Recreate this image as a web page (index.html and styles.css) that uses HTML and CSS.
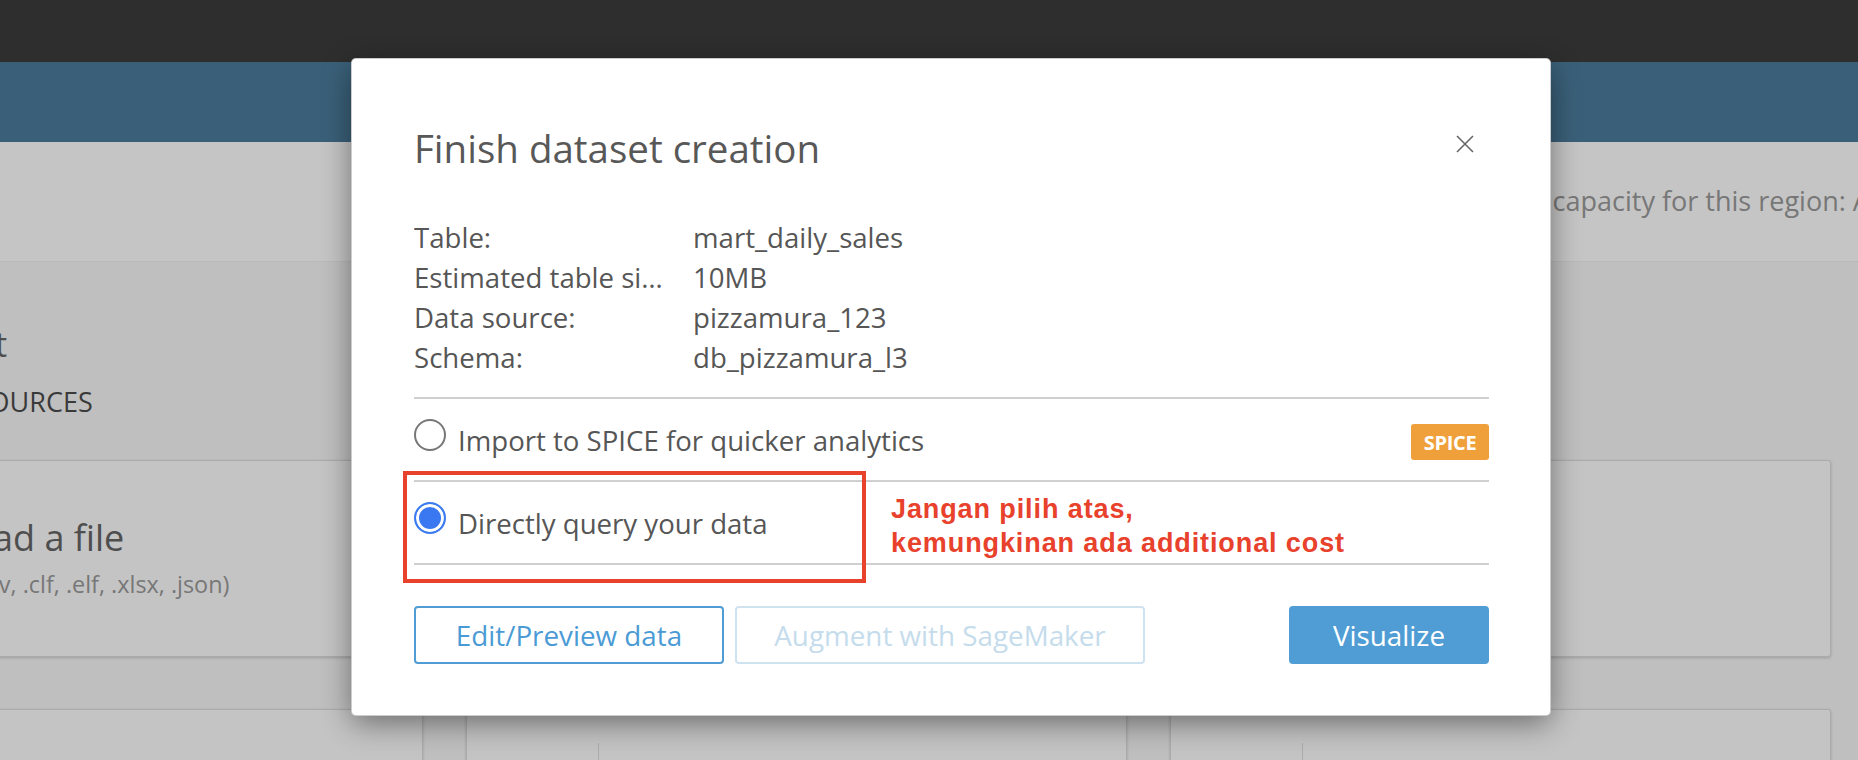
FILE: index.html
```html
<!DOCTYPE html>
<html lang="en">
<head>
<meta charset="utf-8">
<title>Finish dataset creation</title>
<link rel="stylesheet" href="styles.css">
</head>
<body>
<div class="topbar"></div>
<div class="navbar"></div>
<div class="band"><span class="capacity">SPICE capacity for this region: Available</span></div>
<main class="main">
  <div class="intro">
    <h1 class="intro-title">Create a dataset</h1>
    <div class="intro-sub">FROM NEW DATA SOURCES</div>
  </div>
  <div class="grid">
    <div class="card">
      <div class="card-icon"></div>
      <div class="card-text">
        <div class="card-title">Upload a file</div>
        <div class="card-sub">(.csv, .tsv, .clf, .elf, .xlsx, .json)</div>
      </div>
    </div>
    <div class="card">
      <div class="card-icon"></div>
      <div class="card-text">
        <div class="card-title">S3</div>
        <div class="card-sub">Amazon S3</div>
      </div>
    </div>
    <div class="card">
      <div class="card-icon"></div>
      <div class="card-text">
        <div class="card-title">Athena</div>
        <div class="card-sub">Query</div>
      </div>
    </div>
    <div class="card card-low"><div class="card-low-line"></div></div>
    <div class="card card-low"><div class="card-low-line"></div></div>
    <div class="card card-low"><div class="card-low-line"></div></div>
  </div>
</main>

<div class="modal">
  <div class="modal-head">
    <h2 class="modal-title">Finish dataset creation</h2>
    <button class="close" aria-label="Close">
      <svg width="18" height="18" viewBox="0 0 18 18"><path d="M1 1 L17 17 M17 1 L1 17" stroke="#666" stroke-width="1.6" fill="none"/></svg>
    </button>
  </div>
  <dl class="info">
    <dt>Table:</dt><dd>mart_daily_sales</dd>
    <dt>Estimated table size:</dt><dd>10MB</dd>
    <dt>Data source:</dt><dd>pizzamura_123</dd>
    <dt>Schema:</dt><dd>db_pizzamura_l3</dd>
  </dl>
  <div class="options">
    <div class="option">
      <span class="radio"></span>
      <span class="opt-text">Import to SPICE for quicker analytics</span>
      <span class="badge">SPICE</span>
    </div>
    <div class="option">
      <span class="radio radio-on"></span>
      <span class="opt-text">Directly query your data</span>
    </div>
  </div>
  <div class="actions">
    <button class="btn btn-outline">Edit/Preview data</button>
    <button class="btn btn-disabled">Augment with SageMaker</button>
    <button class="btn btn-primary">Visualize</button>
  </div>
</div>

<div class="annot-box"></div>
<div class="annot-text">Jangan pilih atas,<br>kemungkinan ada additional cost</div>
</body>
</html>
```
FILE: styles.css
```css
html, body {
  margin: 0;
  padding: 0;
}
body {
  width: 1858px;
  height: 760px;
  overflow: hidden;
  background: #bfbfbf;
  font-family: "Open Sans", "Noto Sans", sans-serif;
  position: relative;
}
.topbar {
  height: 62px;
  background: #2e2e2e;
}
.navbar {
  height: 80px;
  background: #3a6079;
}
.band {
  box-sizing: border-box;
  height: 120px;
  background: #c5c5c5;
  border-bottom: 1px solid #b9b9b9;
  padding-top: 41px;
  padding-left: 1475px;
  white-space: nowrap;
  overflow: hidden;
}
.capacity {
  font-size: 27px;
  line-height: 36px;
  color: #777777;
}
.main {
  padding-top: 62px;
}
.intro {
  margin-left: -252px;
  white-space: nowrap;
}
.intro-title {
  margin: 0;
  font-size: 34px;
  line-height: 40px;
  font-weight: 400;
  color: #4e4e4e;
}
.intro-sub {
  margin-top: 21px;
  font-size: 27px;
  line-height: 34px;
  color: #3a3a3a;
}
.grid {
  display: grid;
  grid-template-columns: repeat(3, 661px);
  grid-template-rows: 197px 200px;
  column-gap: 43px;
  row-gap: 52px;
  margin-left: -238px;
  margin-top: 41px;
}
.card {
  box-sizing: border-box;
  display: flex;
  align-items: flex-start;
  background: #c4c4c4;
  border: 1px solid #ababab;
  border-radius: 3px;
  box-shadow: 0 1px 3px rgba(0, 0, 0, 0.18);
  padding: 55px 0 0 30px;
}
.card-icon {
  width: 80px;
  height: 80px;
  margin-right: 41px;
  flex: none;
}
.card-text {
  white-space: nowrap;
}
.card-title {
  font-size: 36px;
  line-height: 44px;
  color: #4e4e4e;
}
.card-sub {
  margin-top: 9px;
  font-size: 23.4px;
  line-height: 30px;
  color: #777777;
}
.card-low {
  padding: 33px 0 0 131px;
}
.card-low-line {
  width: 0;
  height: 100%;
  border-left: 1px solid #ababab;
}

/* modal */
.modal {
  position: absolute;
  left: 352px;
  top: 59px;
  width: 1198px;
  box-sizing: border-box;
  padding: 65px 61px 51px 62px;
  background: #fff;
  border-radius: 4px;
  box-shadow: 0 0 0 1px #cccccc, 0 8px 30px rgba(0, 0, 0, 0.45);
  color: #565656;
}
.modal-head {
  display: flex;
  justify-content: space-between;
  align-items: flex-start;
}
.modal-title {
  margin: 0;
  font-size: 38.5px;
  line-height: 48px;
  font-weight: 400;
  color: #585858;
}
.close {
  width: 18px;
  height: 18px;
  margin: 11px 15px 0 0;
  padding: 0;
  border: none;
  background: none;
  display: block;
}
.close svg {
  display: block;
}
.info {
  display: grid;
  grid-template-columns: 252px 1fr;
  column-gap: 27px;
  margin: 45px 0 0;
  font-size: 27.6px;
  line-height: 40px;
}
.info dt {
  overflow: hidden;
  text-overflow: ellipsis;
  white-space: nowrap;
}
.info dd {
  margin: 0;
}
.options {
  margin-top: 20px;
  border-top: 2px solid #d0d0d0;
}
.option {
  display: flex;
  align-items: center;
  height: 81px;
  border-bottom: 2px solid #d0d0d0;
}
.radio {
  box-sizing: border-box;
  flex: none;
  width: 32px;
  height: 32px;
  border: 2px solid #777777;
  border-radius: 50%;
  margin-right: 12px;
  margin-bottom: 10px;
  background: #fff;
}
.radio-on {
  border-color: #3b7cf0;
  background: #3a78f2;
  box-shadow: inset 0 0 0 3px #fff;
}
.opt-text {
  font-size: 27.6px;
  line-height: 36px;
}
.badge {
  margin-left: auto;
  margin-top: 5px;
  width: 78px;
  height: 36px;
  border-radius: 3px;
  background: #f0a03a;
  color: #fff;
  font-weight: 700;
  font-size: 20px;
  letter-spacing: -0.3px;
  display: flex;
  align-items: center;
  justify-content: center;
}
.actions {
  display: flex;
  gap: 11px;
  margin-top: 41px;
}
.btn {
  box-sizing: border-box;
  height: 58px;
  border-radius: 4px;
  border: 2px solid #4f9dd4;
  background: #fff;
  font-family: "Open Sans", "Noto Sans", sans-serif;
  font-size: 27.8px;
  padding: 0;
}
.btn-outline {
  width: 310px;
  color: #4a9bd5;
}
.btn-disabled {
  width: 410px;
  border-color: #cfe2ef;
  color: #c5dcec;
}
.btn-primary {
  width: 200px;
  margin-left: auto;
  background: #4f9dd4;
  color: #fff;
}

/* annotation overlay */
.annot-box {
  position: absolute;
  left: 403px;
  top: 471px;
  width: 463px;
  height: 112px;
  box-sizing: border-box;
  border: 4px solid #e8412c;
}
.annot-text {
  position: absolute;
  left: 891px;
  top: 492px;
  font-family: "Liberation Sans", Arial, sans-serif;
  font-weight: 700;
  font-size: 27px;
  line-height: 34px;
  letter-spacing: 0.9px;
  color: #e8412c;
  white-space: nowrap;
}
```
